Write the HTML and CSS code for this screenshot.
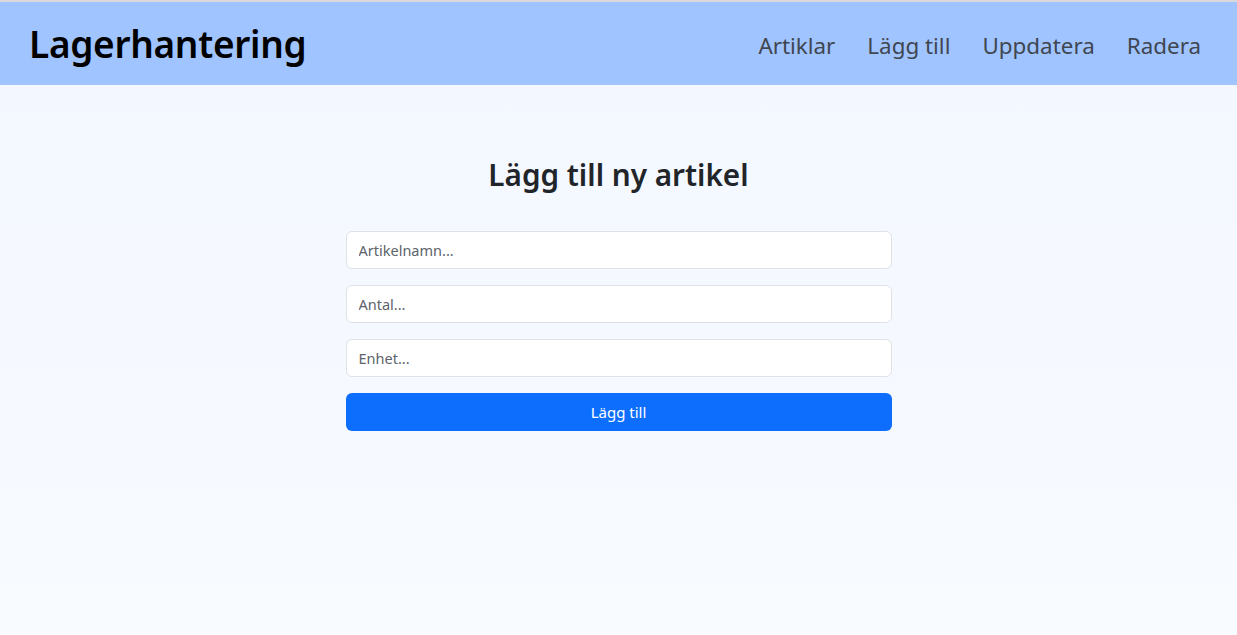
FILE: index.html
```html
<!DOCTYPE html>
<html lang="sv">
<head>
<meta charset="utf-8">
<title>Lagerhantering</title>
<link rel="stylesheet" href="styles.css">
</head>
<body>
<header class="topbar">
  <h1 class="brand">Lagerhantering</h1>
  <nav class="nav">
    <a class="nav-link" href="#">Artiklar</a>
    <a class="nav-link" href="#">Lägg till</a>
    <a class="nav-link" href="#">Uppdatera</a>
    <a class="nav-link" href="#">Radera</a>
  </nav>
</header>
<main class="main">
  <section class="panel">
    <h2 class="title">Lägg till ny artikel</h2>
    <form class="form">
      <input class="field" type="text" placeholder="Artikelnamn...">
      <input class="field" type="text" placeholder="Antal...">
      <input class="field" type="text" placeholder="Enhet...">
      <button class="btn" type="button">Lägg till</button>
    </form>
  </section>
</main>
</body>
</html>
```

FILE: styles.css
```css
* { box-sizing: border-box; }
html, body { height: 100%; }
body {
  margin: 0;
  font-family: "Noto Sans", "Open Sans", sans-serif;
  color: #212529;
  background: linear-gradient(180deg, #f3f7ff 0%, #f6f9ff 70%, #f8fbff 100%);
  border-top: 2px solid #d9d9d9;
  display: flex;
  flex-direction: column;
}
.topbar {
  background: #a0c4ff;
  height: 83px;
  display: flex;
  align-items: center;
  justify-content: space-between;
  padding: 0 20px 0 29px;
  flex-shrink: 0;
}
.brand {
  margin: 0;
  font-size: 37px;
  font-weight: 600;
  color: #000;
  letter-spacing: -0.3px;
}
.nav {
  display: flex;
  align-items: center;
  padding-top: 3px;
}
.nav-link {
  font-size: 22.4px;
  color: #3f4650;
  text-decoration: none;
  padding: 0 16px;
}
.main {
  flex: 1;
  display: flex;
  justify-content: center;
  padding-top: 72px;
}
.panel {
  width: 546px;
}
.title {
  margin: 0 0 38px;
  text-align: center;
  font-size: 29.7px;
  font-weight: 600;
  line-height: 1.2;
}
.form {
  display: flex;
  flex-direction: column;
  gap: 16px;
}
.field {
  height: 38px;
  border: 1px solid #dee2e6;
  border-radius: 6px;
  background: #fff;
  padding: 0 12px;
  font-family: inherit;
  font-size: 14.5px;
  color: #212529;
}
.field::placeholder { color: #5c636a; }
.btn {
  height: 38px;
  border: none;
  border-radius: 6px;
  background: #0d6efd;
  color: #fff;
  font-family: inherit;
  font-size: 15px;
}
```
